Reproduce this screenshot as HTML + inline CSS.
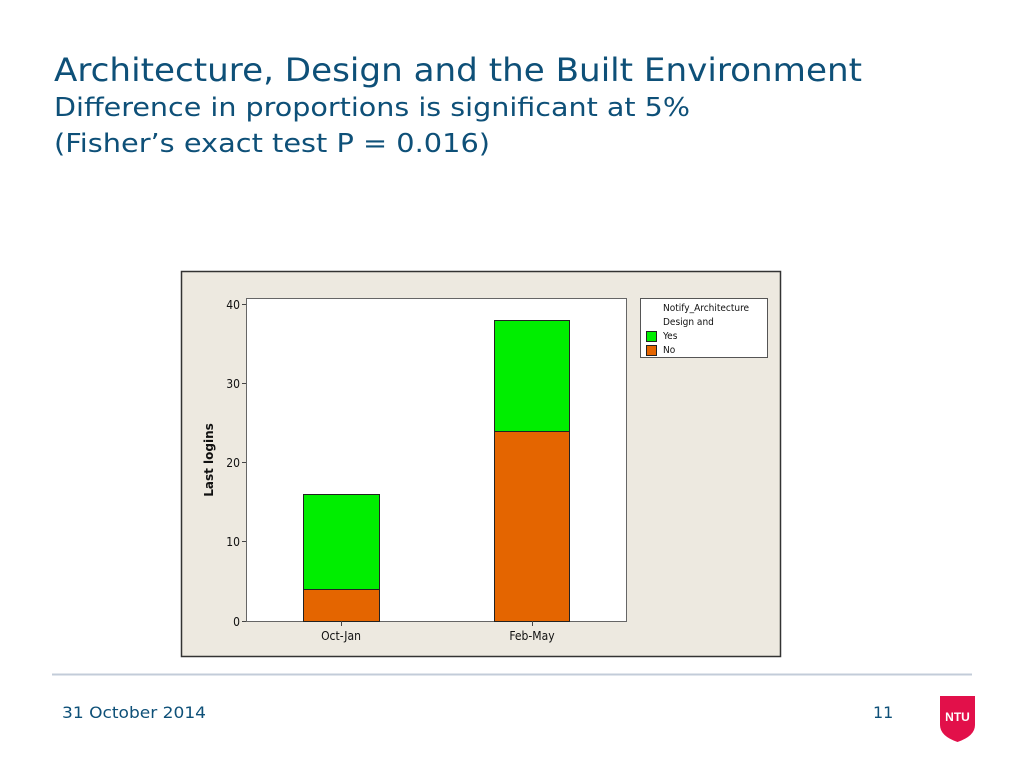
<!DOCTYPE html>
<html><head><meta charset="utf-8"><style>
html,body{margin:0;padding:0;background:#fff;}
svg{display:block;}
</style></head><body>
<svg width="1024" height="768" viewBox="0 0 1024 768" xmlns="http://www.w3.org/2000/svg">
<rect width="1024" height="768" fill="#fff"/>
<g font-family="'DejaVu Sans','Liberation Sans',sans-serif" fill="#0e5078">
<text x="54" y="81" font-size="32" textLength="808" lengthAdjust="spacingAndGlyphs">Architecture, Design and the Built Environment</text>
<text x="54" y="116" font-size="26" textLength="636" lengthAdjust="spacingAndGlyphs">Difference in proportions is significant at 5%</text>
<text x="54" y="152" font-size="26" textLength="436" lengthAdjust="spacingAndGlyphs">(Fisher’s exact test P = 0.016)</text>
<text x="62" y="718" font-size="16" textLength="144" lengthAdjust="spacingAndGlyphs">31 October 2014</text>
<text x="873" y="718" font-size="16">11</text>
</g>
<line x1="52" y1="674.5" x2="972" y2="674.5" stroke="#c3ccd9" stroke-width="2"/>
<!-- chart -->
<rect x="181.5" y="271.5" width="599" height="385" fill="#ede9e0" stroke="#333" stroke-width="1.5"/>
<rect x="246.5" y="298.5" width="380" height="323" fill="#fff" stroke="#666" stroke-width="1"/>
<g stroke="#222" stroke-width="1">
<rect x="303.5" y="494.5" width="76" height="95" fill="#00ee00"/>
<rect x="303.5" y="589.5" width="76" height="32" fill="#e46500"/>
<rect x="494.5" y="320.5" width="75" height="111" fill="#00ee00"/>
<rect x="494.5" y="431.5" width="75" height="190" fill="#e46500"/>
</g>
<g stroke="#444" stroke-width="1">
<line x1="242" y1="304.5" x2="246" y2="304.5"/>
<line x1="242" y1="383.5" x2="246" y2="383.5"/>
<line x1="242" y1="462.5" x2="246" y2="462.5"/>
<line x1="242" y1="541.5" x2="246" y2="541.5"/>
<line x1="242" y1="621.5" x2="246" y2="621.5"/>
<line x1="341.5" y1="621" x2="341.5" y2="626"/>
<line x1="532.5" y1="621" x2="532.5" y2="626"/>
</g>
<g font-family="'DejaVu Sans Condensed','Liberation Sans Narrow','Liberation Sans',sans-serif" font-size="12" fill="#111">
<text x="240" y="309" text-anchor="end">40</text>
<text x="240" y="388" text-anchor="end">30</text>
<text x="240" y="467" text-anchor="end">20</text>
<text x="240" y="546" text-anchor="end">10</text>
<text x="240" y="626" text-anchor="end">0</text>
<text x="341" y="640" text-anchor="middle">Oct-Jan</text>
<text x="532" y="640" text-anchor="middle">Feb-May</text>
<text transform="translate(213,460) rotate(-90)" text-anchor="middle" font-weight="bold" font-family="'DejaVu Sans','Liberation Sans',sans-serif" font-size="12">Last logins</text>
</g>
<rect x="640.5" y="298.5" width="127" height="59" fill="#fff" stroke="#555" stroke-width="1"/>
<g font-family="'DejaVu Sans Condensed','Liberation Sans',sans-serif" font-size="10" fill="#111">
<text x="663" y="311">Notify_Architecture</text>
<text x="663" y="325">Design and</text>
<text x="663" y="339">Yes</text>
<text x="663" y="353">No</text>
</g>
<rect x="646.5" y="331.5" width="10" height="10" fill="#00ee00" stroke="#222"/>
<rect x="646.5" y="345.5" width="10" height="10" fill="#e46500" stroke="#222"/>
<!-- logo -->
<path d="M940 696 H975 V725 Q975 736 957.5 742 Q940 736 940 725 Z" fill="#e2104a"/>
<text x="957.5" y="721" text-anchor="middle" font-family="'Liberation Sans',sans-serif" font-weight="bold" font-size="12" fill="#fff">NTU</text>
</svg>
</body></html>
